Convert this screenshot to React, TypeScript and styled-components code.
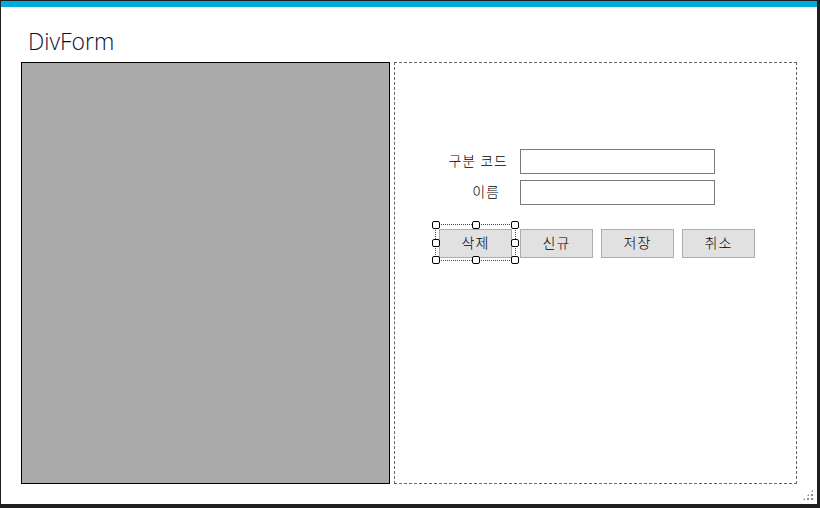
import styled, { createGlobalStyle } from 'styled-components';

const GlobalStyle = createGlobalStyle`
  html, body {
    margin: 0;
    padding: 0;
    background: #ffffff;
  }
  * {
    box-sizing: border-box;
  }
`;

const Frame = styled.div`
  position: relative;
  width: 820px;
  height: 508px;
  display: flex;
  flex-direction: column;
  background: #ffffff;
  border-top: 1px solid #1e1e1e;
  border-left: 1px solid #1e1e1e;
  border-right: 3px solid #1e1e1e;
  border-bottom: 4px solid #1e1e1e;
  font-family: "Noto Sans CJK KR", "Noto Sans", sans-serif;
`;

const AccentBar = styled.div`
  height: 6px;
  flex: none;
  background: #00acdc;
`;

const TitleBar = styled.div`
  height: 55px;
  flex: none;
  padding: 21px 0 0 27px;
`;

const Title = styled.h1`
  margin: 0;
  font-family: "Open Sans", "Lato", sans-serif;
  font-weight: 300;
  font-size: 23px;
  line-height: 26px;
  color: #0c0c30;
`;

const Workspace = styled.div`
  flex: 1;
  display: flex;
  gap: 4px;
  padding: 0 20px 20px 20px;
`;

const PreviewPanel = styled.div`
  width: 369px;
  background: #aaaaaa;
  border: 1px solid #000000;
`;

const FormPanel = styled.div`
  flex: 1;
  border: 1px dashed #666666;
  padding: 86px 0 0 44px;
`;

const FieldGrid = styled.div`
  display: grid;
  grid-template-columns: 73px 195px;
  column-gap: 8px;
  row-gap: 6px;
`;

const Label = styled.label<{ $pad: number }>`
  display: flex;
  align-items: center;
  justify-content: flex-end;
  padding-right: ${p => p.$pad}px;
  padding-bottom: 4px;
  font-size: 14px;
  font-weight: 300;
  letter-spacing: 1px;
  color: #000000;
  white-space: nowrap;
`;

const TextBox = styled.input`
  height: 25px;
  margin: 0;
  padding: 0 4px;
  border: 1px solid #7a7a7a;
  background: #ffffff;
  outline: none;
`;

const ButtonRow = styled.div`
  display: flex;
  gap: 8px;
  margin-top: 24px;
`;

const ActionButton = styled.button`
  width: 73px;
  height: 29px;
  margin: 0;
  padding: 0 0 3px 0;
  border: 1px solid #adadad;
  background: #e1e1e1;
  font-family: "Noto Sans CJK KR", "Noto Sans", sans-serif;
  font-size: 14px;
  font-weight: 300;
  letter-spacing: 1px;
  color: #000000;
`;

const Selected = styled.div`
  position: relative;
  display: flex;
`;

const SelectionBox = styled.div`
  position: absolute;
  left: -4px;
  right: -4px;
  top: -5px;
  bottom: -3px;
  border: 1px dotted #444444;
  pointer-events: none;
`;

const Handle = styled.span<{ $x: number; $y: number }>`
  position: absolute;
  left: ${p => p.$x}%;
  top: ${p => p.$y}%;
  width: 8px;
  height: 8px;
  margin: -4px 0 0 -4px;
  background: #ffffff;
  border: 1px solid #000000;
  border-radius: 2px;
`;

const Grip = styled.div`
  position: absolute;
  right: 3px;
  bottom: 3px;
  width: 12px;
  height: 12px;
  background-image: radial-gradient(circle, #8a8a8a 1px, transparent 1.2px);
  background-size: 4px 4px;
  clip-path: polygon(100% 0, 100% 100%, 0 100%);
`;

const handles = [
  [0, 0], [50, 0], [100, 0],
  [0, 50], [100, 50],
  [0, 100], [50, 100], [100, 100],
];

export default function App() {
  return (
    <>
      <GlobalStyle />
      <Frame>
        <AccentBar />
        <TitleBar>
          <Title>DivForm</Title>
        </TitleBar>
        <Workspace>
          <PreviewPanel />
          <FormPanel>
            <FieldGrid>
              <Label $pad={4}>구분 코드</Label>
              <TextBox type="text" />
              <Label $pad={12}>이름</Label>
              <TextBox type="text" />
            </FieldGrid>
            <ButtonRow>
              <Selected>
                <ActionButton>삭제</ActionButton>
                <SelectionBox>
                  {handles.map(([x, y]) => (
                    <Handle key={`${x}-${y}`} $x={x} $y={y} />
                  ))}
                </SelectionBox>
              </Selected>
              <ActionButton>신규</ActionButton>
              <ActionButton>저장</ActionButton>
              <ActionButton>취소</ActionButton>
            </ButtonRow>
          </FormPanel>
        </Workspace>
        <Grip />
      </Frame>
    </>
  );
}
